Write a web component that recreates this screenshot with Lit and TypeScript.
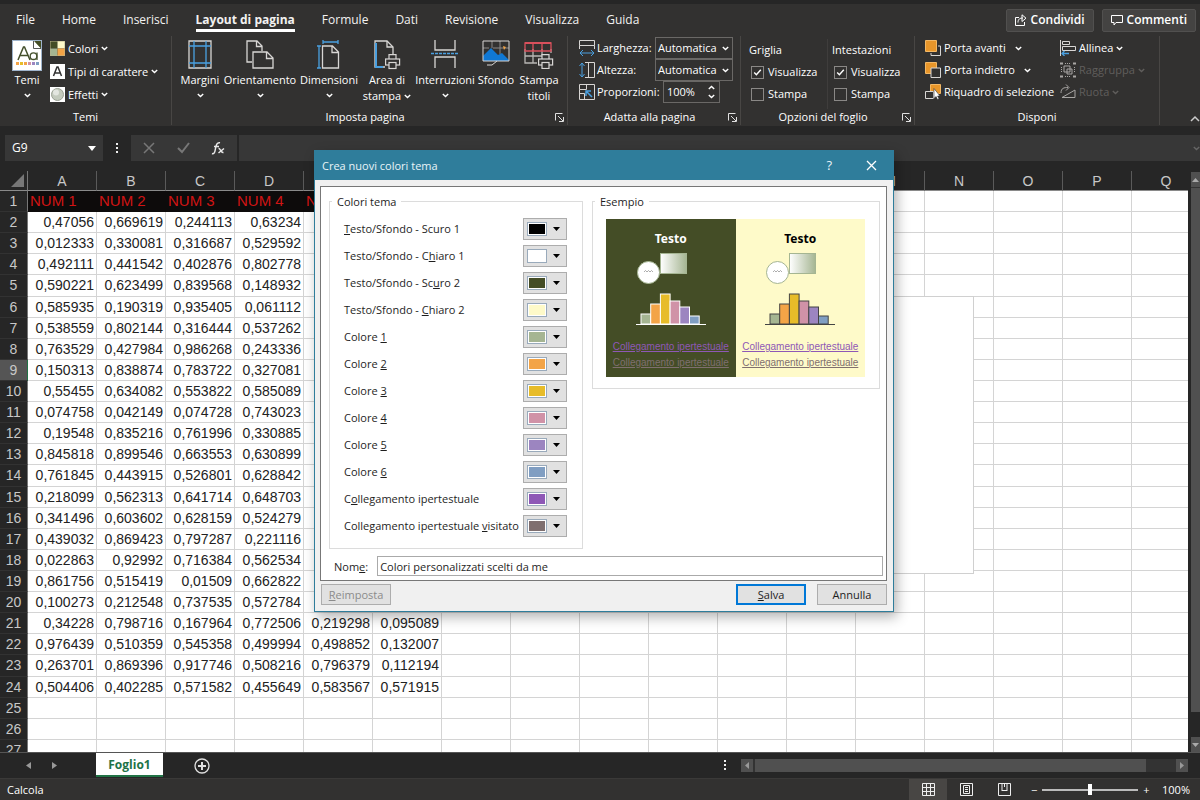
import { LitElement, html, css, svg, nothing } from "lit";
import { customElement } from "lit/decorators.js";

const COLS = "ABCDEFGHIJKLMNOPQ".split("");

const DATA: string[][] = [
  ["0,47056", "0,669619", "0,244113", "0,63234"],
  ["0,012333", "0,330081", "0,316687", "0,529592"],
  ["0,492111", "0,441542", "0,402876", "0,802778"],
  ["0,590221", "0,623499", "0,839568", "0,148932"],
  ["0,585935", "0,190319", "0,935405", "0,061112"],
  ["0,538559", "0,802144", "0,316444", "0,537262"],
  ["0,763529", "0,427984", "0,986268", "0,243336"],
  ["0,150313", "0,838874", "0,783722", "0,327081"],
  ["0,55455", "0,634082", "0,553822", "0,585089"],
  ["0,074758", "0,042149", "0,074728", "0,743023"],
  ["0,19548", "0,835216", "0,761996", "0,330885"],
  ["0,845818", "0,899546", "0,663553", "0,630899"],
  ["0,761845", "0,443915", "0,526801", "0,628842"],
  ["0,218099", "0,562313", "0,641714", "0,648703"],
  ["0,341496", "0,603602", "0,628159", "0,524279"],
  ["0,439032", "0,869423", "0,797287", "0,221116"],
  ["0,022863", "0,92992", "0,716384", "0,562534"],
  ["0,861756", "0,515419", "0,01509", "0,662822"],
  ["0,100273", "0,212548", "0,737535", "0,572784"],
  ["0,34228", "0,798716", "0,167964", "0,772506", "0,219298", "0,095089"],
  ["0,976439", "0,510359", "0,545358", "0,499994", "0,498852", "0,132007"],
  ["0,263701", "0,869396", "0,917746", "0,508216", "0,796379", "0,112194"],
  ["0,504406", "0,402285", "0,571582", "0,455649", "0,583567", "0,571915"],
];

const SWATCHES: [string, string, string, string][] = [
  ["", "T", "esto/Sfondo - Scuro 1", "#000000"],
  ["Testo/Sfondo - C", "h", "iaro 1", "#ffffff"],
  ["Testo/Sfondo - Sc", "u", "ro 2", "#444d26"],
  ["Testo/Sfondo - ", "C", "hiaro 2", "#fefac9"],
  ["Colore ", "1", "", "#a5b592"],
  ["Colore ", "2", "", "#f3a447"],
  ["Colore ", "3", "", "#e7bc29"],
  ["Colore ", "4", "", "#d092a7"],
  ["Colore ", "5", "", "#9c85c0"],
  ["Colore ", "6", "", "#809ec2"],
  ["C", "o", "llegamento ipertestuale", "#8e58b6"],
  ["Collegamento ipertestuale ", "v", "isitato", "#7f6f6f"],
];

const caret = html`<svg class="caret" width="7" height="5" viewBox="0 0 7 5"><path d="M.8 1 3.5 3.6 6.2 1" fill="none" stroke="currentColor" stroke-width="1.4"/></svg>`;
const launcher = html`<svg width="9" height="9" viewBox="0 0 9 9" fill="none" stroke="#e0e0e0"><path d="M.5 7.5v-7h7M3 3l5 5M8.5 4v4.5H4"/></svg>`;

const printer = (x: number, y: number) => svg`<g transform="translate(${x} ${y})" fill="#323130" stroke="#d8d6d4" stroke-width="1.2"><path d="M4 5.500V.6h7v5"/><rect x=".6" y="5" width="14" height="6"/><rect x="4" y="8.500" width="7" height="6"/></g>`;

const icons = {
  temi: html`<svg width="30" height="31" viewBox="0 0 30 31"><rect x=".5" y=".5" width="29" height="30" fill="#fff" stroke="#9fb4cc"/><path d="M22 1h7v8z" fill="#444d26"/><path d="M21.500 1v7.500H29" fill="#fff" stroke="#555"/><path d="M6 20 11.500 7h1L18 20M8 15.500h8" fill="none" stroke="#44502c" stroke-width="1.500"/><circle cx="21.500" cy="16.200" r="3.300" fill="none" stroke="#44502c" stroke-width="1.300"/><path d="M25 12.500V20" stroke="#44502c" stroke-width="1.300"/><path d="M4 22h3v3H4z" fill="#f3a447"/><path d="M8 22h3v3H8z" fill="#e7bc29"/><path d="M12 22h3v3h-3z" fill="#f3a447"/><path d="M16 22h3v3h-3z" fill="#d092a7"/><path d="M20 22h3v3h-3z" fill="#9c85c0"/><path d="M24 22h3v3h-3z" fill="#809ec2"/></svg>`,
  colori: html`<svg width="15" height="15" viewBox="0 0 15 15"><path fill="#444d26" d="M0 0h7.500v7.500H0z"/><path fill="#fefac9" d="M7.500 0H15v7.500H7.500z"/><path fill="#a5b592" d="M0 7.500h7.500V15H0z"/><path fill="#f3a447" d="M7.500 7.500H15V15H7.500z"/><path d="M0 0h15v15H0z" fill="none" stroke="#b9b48c"/></svg>`,
  tipi: html`<svg width="15" height="15" viewBox="0 0 15 15"><path fill="#fff" d="M0 0h15v15H0z"/><path d="M3.500 12 7 3h1l3.500 9M5 9h5" fill="none" stroke="#333" stroke-width="1.500"/></svg>`,
  effetti: html`<svg width="15" height="15" viewBox="0 0 15 15"><path fill="#fff" d="M0 0h15v15H0z"/><circle cx="7.500" cy="7.500" r="6" fill="#c3cabd" stroke="#9aa094"/><circle cx="6" cy="5.500" r="3" fill="#e3e6e0"/></svg>`,
  margini: html`<svg width="24" height="29" viewBox="0 0 24 29" fill="none"><path d="M1 1h22v27H1z" stroke="#d8d6d4" stroke-width="1.300"/><path d="M6 1v27M18 1v27M1 6h22M1 23h22" stroke="#4aa0e0" stroke-width="1.300"/></svg>`,
  orient: html`<svg width="28" height="29" viewBox="0 0 28 29" fill="none" stroke="#d8d6d4" stroke-width="1.300"><path d="M6 22H1V1h10l5 5v5M10.500 1v5.500H16"/><path d="M7 12h14l6 6v10H7zM20.500 12v6.500H27"/></svg>`,
  dimens: html`<svg width="24" height="29" viewBox="0 0 24 29" fill="none" stroke-width="1.300"><path d="M5.500 6h10l6 6v16h-16zM15 6v6.500h6.500" stroke="#d8d6d4"/><path d="M6 2h15M6 0v4M21 0v4M2 6v22M0 6h4M0 28h4" stroke="#4aa0e0"/></svg>`,
  area: html`<svg width="28" height="30" viewBox="0 0 28 30" fill="none" stroke-width="1.300"><path d="M12 27H2V1h12l6 6v8" stroke="#d8d6d4"/><path d="M14 1v6h6" stroke="#d8d6d4"/><path d="M10 27H3V3" stroke="#4aa0e0" stroke-width="2"/>${printer(12, 14)}</svg>`,
  interr: html`<svg width="28" height="29" viewBox="0 0 28 29" fill="none" stroke-width="1.300"><path d="M4 0v10h20V0M4 28V17h20v11" stroke="#d8d6d4"/><path d="M0 13.500h28" stroke="#4aa0e0" stroke-dasharray="3 1"/></svg>`,
  sfondo: html`<svg width="28" height="26" viewBox="0 0 28 26"><path d="M1 1h26v20H1z" fill="#323130"/><path d="M1 8h6M11 8h16M10 1v7M18 1v13" stroke="#8a8886"/><path d="M1 21v-5L9 8l7 7 4-2 7 7v1z" fill="#1078d4"/><path d="M21 6l3 1-2 3z" fill="#f3a447"/><path d="M1 1h26v20H1zM5 25h5l5-4" fill="none" stroke="#d8d6d4"/></svg>`,
  titoli: html`<svg width="30" height="29" viewBox="0 0 30 29" fill="none" stroke-width="1.300"><path d="M1 9v14h12M1 16h20M9 9v14M18 9v6M27 9v4" stroke="#b8b6b4"/><path d="M1 3h26v8H1zM9 3v8M18 3v8" stroke="#d8505c"/><path d="M1 3h26" stroke="#d8505c" stroke-width="2"/>${printer(14, 14)}</svg>`,
  largh: html`<svg width="16" height="16" viewBox="0 0 16 16" fill="none"><path d="M.5.5h15v5H.5zM.5 9V5.500M15.500 9V5.500" stroke="#d8d6d4"/><path d="M1 13h14M4 10l-3 3 3 3M12 10l3 3-3 3" stroke="#4aa0e0"/></svg>`,
  alt: html`<svg width="16" height="16" viewBox="0 0 16 16" fill="none"><path d="M6 .5h9.500v15H6M9.500.5v15" stroke="#d8d6d4"/><path d="M3 1v14M.5 4 3 1l2.500 3M.5 12 3 15l2.500-3" stroke="#4aa0e0"/></svg>`,
  prop: html`<svg width="16" height="16" viewBox="0 0 16 16" fill="none"><path d="M.5 5.500V.5h15v15H.5zM.5 9.500h5V16M.5 5.500h7V.5" stroke="#d8d6d4"/><path d="M13 13 7 7M7 12V7h5" stroke="#4aa0e0" stroke-width="1.500"/></svg>`,
  avanti: html`<svg width="16" height="16" viewBox="0 0 16 16"><path d="M13 6h2.500v9.500H6V13" fill="none" stroke="#d8d6d4"/><path fill="#e8962a" stroke="#f3b865" d="M.5.5h11v11H.5z"/></svg>`,
  indietro: html`<svg width="16" height="16" viewBox="0 0 16 16"><path fill="#e8962a" stroke="#f3b865" d="M.5.5h11v11H.5z"/><path d="M6 6h9.500v9.500H6z" fill="#323130" stroke="#d8d6d4"/></svg>`,
  riquadro: html`<svg width="16" height="16" viewBox="0 0 16 16"><path fill="#e8962a" stroke="#f3b865" d="M5.500.5h10v9h-10z"/><path d="M.5 7.500h8v7h-8z" fill="#323130" stroke="#d8d6d4"/><path d="M9 4.500v10l2-2 1.500 3 1.500-.8-1.400-2.700H15z" fill="#fff" stroke="#323130" stroke-width=".6"/></svg>`,
  allinea: html`<svg width="16" height="16" viewBox="0 0 16 16" fill="none"><path d="M.5 0v16M2.500 1.500h7v3h-7zM2.500 6.500h13v4h-13z" stroke="#d8d6d4"/><path d="M2 13.500h7M4.500 11 2 13.500 4.500 16" stroke="#4aa0e0" stroke-width="1.300"/></svg>`,
  raggr: html`<svg width="16" height="16" viewBox="0 0 16 16" fill="none" stroke="#a8a6a4"><path d="M1.500 5v6M14.500 5v6M5 1.500h6M5 14.500h6" stroke-dasharray="1 1"/><path d="M0 1.500h3M0 14.500h3M13 1.500h3M13 14.500h3" stroke-width="2"/><path d="M4 4h6v6H4zM7 7h5v5H7z"/></svg>`,
  ruota: html`<svg width="16" height="16" viewBox="0 0 16 16" fill="none" stroke="#a8a6a4"><path d="M2 13.500h13V6zM1 9C1 4 4 3.500 8 3.500M6 .5l3 3-3 3"/></svg>`,
};

@customElement("app-root")
export class AppRoot extends LitElement {
  static styles = css`
    :host {
      display: flex;
      flex-direction: column;
      position: relative;
      height: 100vh;
      overflow: hidden;
      background: #262626;
      color: #fff;
      font: 12px/16px "Open Sans", "Noto Sans", sans-serif;
    }
    * { box-sizing: border-box; }
    svg { display: block; flex: none; }
    button, input, select {
      font: inherit;
      color: inherit;
      background: none;
      border: 0;
      padding: 0;
      margin: 0;
      border-radius: 0;
      outline: 0;
    }
    .ribbon { flex: none; margin-top: 4px; background: #323130; height: 122px; display: flex; flex-direction: column; }
    .tabs { display: flex; align-items: center; height: 32px; padding-left: 16px; }
    .tabs nav { display: flex; gap: 27px; flex: 1; align-items: center; }
    .tab { color: #f3f2f1; text-decoration: none; padding: 3px 0 1px; border-bottom: 3px solid transparent; }
    .tab.on { font-weight: 700; border-color: #fff; }
    .actions { display: flex; gap: 8px; padding-right: 4px; }
    .action { display: flex; align-items: center; gap: 4px; height: 23px; padding: 0 8px; background: #444342; border: 1px solid #51504f; border-radius: 2px; font-weight: 600; }
    .groups { flex: 1; display: flex; padding-bottom: 1px; font-size: 11px; font-weight: 500; }
    .group { display: flex; flex-direction: column; border-right: 1px solid #484644; flex: none; }
    .body { flex: 1; display: flex; }
    .foot { display: flex; align-items: center; height: 16px; padding: 0 3px; }
    .foot span { flex: 1; text-align: center; }
    .big { display: flex; flex-direction: column; align-items: center; justify-content: flex-start; padding-top: 4px; flex: none; white-space: nowrap; }
    .big .pic { height: 32px; }
    .big .row { display: flex; gap: 3px; align-items: center; }
    .big .caret { margin-top: 5px; }
    .big .row .caret { margin: 0; }
    .stack { display: flex; flex-direction: column; padding-top: 1px; }
    .item { display: flex; align-items: center; gap: 3px; height: 22px; white-space: nowrap; }
    .off { color: #605e5c; }
    .g-temi { width: 172px; }
    .g-temi .body { padding-left: 12px; gap: 8px; }
    .g-temi .item { height: 23px; }
    .g-page { width: 396px; }
    .g-page .body { padding-left: 7px; }
    .g-fit { width: 173px; }
    .g-fit .body { padding-left: 11px; }
    .g-fit .item { gap: 2px; }
    .g-opt { width: 174px; }
    .g-opt .body { padding: 3px 0 0 8px; }
    .g-disp { width: 245px; }
    .g-disp .body { padding-left: 10px; gap: 6px; }
    .g-disp .split .caret { margin-left: 6px; }
    .w42 { width: 42px; } .w44 { width: 44px; } .w56 { width: 56px; } .w60 { width: 60px; } .w78 { width: 78px; }
    .lab { width: 56px; }
    .lab.wide { width: 64px; }
    .sel { position: relative; width: 78px; height: 22px; border: 1px solid #6a6866; display: flex; align-items: center; }
    .sel select { appearance: none; width: 100%; padding-left: 2px; }
    .sel .caret { position: absolute; right: 3px; pointer-events: none; }
    .spin { width: 57px; height: 22px; border: 1px solid #6a6866; display: flex; align-items: center; padding: 0 4px 0 3px; }
    .spin input { flex: 1; min-width: 0; }
    .spin .arrows { display: flex; flex-direction: column; gap: 4px; }
    .flip { transform: scaleY(-1); }
    .opts { width: 78px; display: flex; flex-direction: column; }
    .opts + .opts { border-left: 1px solid #3f3d3c; padding-left: 4px; width: 85px; }
    .opts .item { gap: 4px; }
    .opts input { appearance: none; width: 13px; height: 13px; border: 1px solid #8a8886; margin: 0 0 0 2px; background: #323130; }
    .opts input:checked { background: #323130 url("data:image/svg+xml,%3Csvg xmlns='http://www.w3.org/2000/svg' viewBox='0 0 10 10'%3E%3Cpath d='M2 5l2 2 4-4.500' fill='none' stroke='%23fff' stroke-width='1.300'/%3E%3C/svg%3E"); }
    .collapse { flex: 1; display: flex; align-items: flex-end; justify-content: flex-end; padding-bottom: 3px; }

    .fbar { flex: none; display: flex; margin-top: 9px; height: 26px; padding-left: 5px; }
    .box { background: #373737; display: flex; align-items: center; }
    .name { width: 98px; padding: 0 7px; }
    .name input { flex: 1; min-width: 0; }
    .dots { width: 28px; display: flex; align-items: center; justify-content: center; }
    .fx { width: 106px; justify-content: space-between; padding: 0 12px; }
    .formula { flex: 1; margin-left: 2px; justify-content: flex-end; color: #666; }
    .formula input { flex: 1; min-width: 0; height: 24px; }

    .main { flex: 1; min-height: 0; display: flex; padding-top: 10px; }
    .sheet { flex: 1; min-width: 0; position: relative; overflow: hidden; }
    table { border-collapse: separate; border-spacing: 0; table-layout: fixed; width: 1201px; height: calc(100% + 9px); font: 14px/18px "Liberation Sans", sans-serif; background: #fff; color: #222; }
    th, td { padding: 0; font-weight: 400; overflow: hidden; white-space: nowrap; }
    thead th { height: 20px; background: #262626; color: #c8c8c8; border-right: 1px solid #5a5a5a; border-bottom: 1px solid #8a8a8a; }
    thead th:first-child { width: 28px; border-right-color: #777; }
    thead th:first-child svg { margin-left: auto; margin-right: 3px; }
    tbody th { height: 21px; background: #262626; color: #c8c8c8; border-right: 1px solid #777; border-bottom: 1px solid #323232; }
    tbody th.cur { background: #555; border-right-color: #217346; }
    td { border-right: 1px solid #d4d4d4; border-bottom: 1px solid #d4d4d4; text-align: right; padding-right: 2px; }
    tr.head td.h { background: #0d0b0b; color: #d01414; text-align: left; padding: 0 0 0 2px; border-color: #0d0b0b; font-size: 15px; }
    .chart { position: absolute; left: 500px; top: 125px; width: 474px; height: 278px; background: #fff; border: 1px solid #d0d0d0; }
    .vscroll { width: 12px; display: flex; flex-direction: column; background: #262626; padding: 1px 0 0 3px; }
    .vscroll button { height: 15px; background: #505050; display: flex; align-items: center; justify-content: center; }
    .vscroll .thumb { flex: 1; background: #505050; border-top: 1px solid #333; margin-bottom: 25px; }

    .sheets { flex: none; height: 26px; display: flex; background: #262626; border-top: 1px solid #555; }
    .nav { width: 96px; display: flex; align-items: center; padding-left: 26px; gap: 21px; }
    .sheettab { height: 24px; width: 67px; padding-top: 2px; background: #fff; color: #217346; border-bottom: 2px solid #217346; font-weight: 700; }
    .add { margin-left: 31px; }
    .hs { margin-left: auto; display: flex; align-items: center; width: 476px; gap: 14px; padding-right: 12px; }
    .track { flex: 1; height: 13px; background: #333; display: flex; }
    .track button { width: 12px; background: #505050; display: flex; align-items: center; justify-content: center; }
    .track .thumb { flex: 1; margin: 0 30px 0 2px; background: #505050; }
    .status { flex: none; height: 22px; display: flex; background: #323130; border-top: 1px solid #3a3938; align-items: center; padding-left: 7px; font-size: 11px; }
    .status .mode { flex: 1; }
    .status .view { height: 21px; width: 38px; display: flex; align-items: center; justify-content: center; }
    .status .view.on { background: #484644; }
    .zoom { display: flex; align-items: center; gap: 5px; width: 177px; padding-left: 8px; }
    .zoom input { appearance: none; width: 96px; height: 2px; background: #bbb; }
    .zoom input::-webkit-slider-thumb { appearance: none; width: 4px; height: 11px; background: #fff; }
    .zoom output { margin-left: auto; padding-right: 10px; }

    .dialog { position: absolute; left: 314px; top: 150px; width: 580px; color: #1e1e1e; background: #f0f0f0; border: 1px solid #2f7d9b; box-shadow: 3px 5px 12px rgba(0, 0, 0, .3); font: 11px/15px "Open Sans", "Noto Sans", sans-serif; }
    .title { display: flex; align-items: center; height: 29px; background: #2f7d9b; color: #e9f4f8; padding: 0 16px 0 7px; }
    .title h1 { flex: 1; margin: 0; font-size: 11px; font-weight: 400; }
    .title button { margin-left: 34px; font-size: 13px; }
    .pane { margin: 6px 6px 0 5px; border: 1px solid #777; background: #fff; padding: 7px 3px 4px 8px; }
    .cols { display: flex; align-items: flex-start; gap: 9px; }
    fieldset { margin: 0; border: 1px solid #dcdcdc; min-width: 0; }
    legend { padding: 0 5px; height: 15px; }
    .theme { width: 254px; padding: 6px 15px 9px 14px; }
    .theme legend { margin-left: -12px; }
    .sw { display: flex; justify-content: space-between; align-items: center; height: 27px; white-space: nowrap; }
    .sw button { width: 44px; height: 22px; background: #e1e1e1; border: 1px solid #adadad; display: flex; align-items: center; gap: 6px; padding-left: 3px; }
    .chip { width: 20px; height: 14px; border: 1px solid #9ab; background: #fff; padding: 1px; }
    .chip i { display: block; height: 10px; }
    .sample { width: 288px; padding: 10px 14px 11px 13px; }
    .sample legend { margin-left: -11px; }
    .previews { display: flex; }
    .pv { flex: 1; min-width: 0; height: 158px; background: #444d26; text-align: center; padding-top: 12px; display: flex; flex-direction: column; align-items: center; }
    .pv b { color: #fff; font: 700 12px/16px "Noto Sans", sans-serif; }
    .pv.light { background: #fefac9; }
    .pv.light b { color: #000; }
    .pv a { font: 10px/16px "Liberation Sans", sans-serif; color: #8e58b6; white-space: nowrap; }
    .pv a + a { color: #7f6f6f; }
    .pv svg { margin: 5px 0 13px; }
    .nome { display: flex; align-items: center; gap: 9px; margin-top: 7px; padding-left: 5px; }
    .nome input { flex: 1; height: 20px; border: 1px solid #aaa; padding: 0 2px; }
    .buttons { display: flex; gap: 11px; padding: 3px 6px 6px; }
    .btn { width: 70px; height: 21px; background: #e1e1e1; border: 1px solid #adadad; }
    .btn:first-child { margin-right: auto; color: #8b8b8b; }
    .btn.def { border: 2px solid #0078d7; }
  `;

  private big(cls: string, icon: unknown, lines: unknown, below = true) {
    return html`<button class="big ${cls}"><span class="pic">${icon}</span>${lines}${below ? caret : nothing}</button>`;
  }

  private item(icon: unknown, label: string, drop = true, off = false, split = false) {
    return html`<button class="item ${off ? "off" : ""} ${split ? "split" : ""}" ?disabled=${off}>${icon}<span>${label}</span>${drop ? caret : nothing}</button>`;
  }

  private group(cls: string, label: string, body: unknown, launch = true) {
    return html`<section class="group ${cls}"><div class="body">${body}</div><div class="foot"><span>${label}</span>${launch ? launcher : nothing}</div></section>`;
  }

  private opts(title: string) {
    return html`<div class="opts"><div class="item">${title}</div><label class="item"><input type="checkbox" checked />Visualizza</label><label class="item"><input type="checkbox" />Stampa</label></div>`;
  }

  private preview(light: boolean) {
    const bars: [number, string][] = [[10, "#a5b592"], [20, "#f3a447"], [30, "#e7bc29"], [23, "#d092a7"], [17, "#9c85c0"], [8, "#809ec2"]];
    const line = light ? "#444" : "#fff";
    const id = light ? "gl" : "gd";
    return html`<div class="pv ${light ? "light" : ""}">
      <b>Testo</b>
      <svg width="70" height="74" viewBox="0 0 70 74">
        <defs><linearGradient id=${id}><stop offset="0" stop-color="#fff"/><stop offset="1" stop-color="#a5b592"/></linearGradient></defs>
        <rect x="24.500" y="1.500" width="26" height="20" fill="url(#${id})" stroke="#a5b592"/>
        <circle cx="12.500" cy="20.500" r="11" fill="#fff" stroke="#a5b592"/>
        <path d="m8 20 1.500-1.500L11 20l1.500-1.500L14 20l1.500-1.500L17 20" fill="none" stroke="#888" stroke-width=".7"/>
        ${bars.map(([h, c], i) => svg`<rect x=${5 + i * 9.7} y=${72 - h} width="9.700" height=${h} fill=${c} stroke=${line} stroke-width="1"/>`)}
        <path d="M0 72.500h70" stroke=${line}/>
      </svg>
      <a href="#">Collegamento ipertestuale</a>
      <a href="#">Collegamento ipertestuale</a>
    </div>`;
  }

  private ribbon() {
    const tabs = ["File", "Home", "Inserisci", "Layout di pagina", "Formule", "Dati", "Revisione", "Visualizza", "Guida"];
    return html`<header class="ribbon">
      <div class="tabs">
        <nav>${tabs.map((t) => html`<a href="#" class="tab ${t.startsWith("Layout") ? "on" : ""}">${t}</a>`)}</nav>
        <div class="actions">
          <button class="action"><svg width="12" height="12" viewBox="0 0 12 12" fill="none" stroke="#fff"><path d="M4 3.500H.5v8h9V8M3 8.500C3 5 5 4 8 4M7 .8l4 3.400L7 7.500z"/></svg>Condividi</button>
          <button class="action"><svg width="12" height="12" viewBox="0 0 12 12" fill="none" stroke="#fff"><path d="M.5 1.500h11v7H5l-2 2.500V8.500H.5z"/></svg>Commenti</button>
        </div>
      </div>
      <div class="groups">
        ${this.group("g-temi", "Temi", html`${this.big("", icons.temi, html`<span>Temi</span>`)}
          <div class="stack">${this.item(icons.colori, "Colori")}${this.item(icons.tipi, "Tipi di carattere")}${this.item(icons.effetti, "Effetti")}</div>`, false)}
        ${this.group("g-page", "Imposta pagina", html`
          ${this.big("w42", icons.margini, html`<span>Margini</span>`)}
          ${this.big("w78", icons.orient, html`<span>Orientamento</span>`)}
          ${this.big("w60", icons.dimens, html`<span>Dimensioni</span>`)}
          ${this.big("w56", icons.area, html`<span>Area di</span><span class="row">stampa ${caret}</span>`, false)}
          ${this.big("w60", icons.interr, html`<span>Interruzioni</span>`)}
          ${this.big("w42", icons.sfondo, html`<span>Sfondo</span>`, false)}
          ${this.big("w44", icons.titoli, html`<span>Stampa</span><span>titoli</span>`, false)}`)}
        ${this.group("g-fit", "Adatta alla pagina", html`<div class="stack">
          ${["Larghezza:", "Altezza:"].map((l, i) => html`<div class="item">${i ? icons.alt : icons.largh}<label class="lab" for="s${i}">${l}</label><span class="sel"><select id="s${i}"><option>Automatica</option></select>${caret}</span></div>`)}
          <div class="item">${icons.prop}<label class="lab wide" for="pct">Proporzioni:</label><span class="spin"><input id="pct" value="100%" /><span class="arrows"><span class="flip">${caret}</span>${caret}</span></span></div>
        </div>`)}
        ${this.group("g-opt", "Opzioni del foglio", html`${this.opts("Griglia")}${this.opts("Intestazioni")}`)}
        ${this.group("g-disp", "Disponi", html`
          <div class="stack">${this.item(icons.avanti, "Porta avanti", true, false, true)}${this.item(icons.indietro, "Porta indietro", true, false, true)}${this.item(icons.riquadro, "Riquadro di selezione", false)}</div>
          <div class="stack">${this.item(icons.allinea, "Allinea")}${this.item(icons.raggr, "Raggruppa", true, true)}${this.item(icons.ruota, "Ruota", true, true)}</div>`, false)}
        <div class="collapse"><svg width="10" height="7" viewBox="0 0 10 7" fill="none" stroke="#ccc" stroke-width="1.500"><path d="m1 6 4-4 4 4"/></svg></div>
      </div>
    </header>`;
  }

  private sheet() {
    return html`<main class="main">
      <div class="sheet">
        <table>
          <thead><tr><th><svg width="13" height="13" viewBox="0 0 13 13"><path d="M13 0v13H0z" fill="#777"/></svg></th>${COLS.map((c) => html`<th scope="col">${c}</th>`)}</tr></thead>
          <tbody>
            <tr class="head"><th scope="row">1</th>${COLS.map((_, i) => html`<td class=${i < 6 ? "h" : ""}>${i < 5 ? `NUM ${i + 1}` : ""}</td>`)}</tr>
            ${Array.from({ length: 26 }, (_, r) => html`<tr><th scope="row" class=${r === 7 ? "cur" : ""}>${r + 2}</th>${COLS.map((_, i) => html`<td>${DATA[r]?.[i] ?? ""}</td>`)}</tr>`)}
          </tbody>
        </table>
        <div class="chart"></div>
      </div>
      <div class="vscroll"><button aria-label="Su"><svg width="7" height="4" viewBox="0 0 7 4"><path d="M0 4 3.500 0 7 4z" fill="#aaa"/></svg></button><div class="thumb"></div><button aria-label="Giù"><svg width="7" height="4" viewBox="0 0 7 4"><path d="M0 0l3.500 4L7 0z" fill="#aaa"/></svg></button></div>
    </main>`;
  }

  private dialog() {
    return html`<div class="dialog" role="dialog" aria-label="Crea nuovi colori tema">
      <div class="title"><h1>Crea nuovi colori tema</h1><button>?</button><button aria-label="Chiudi"><svg width="11" height="11" viewBox="0 0 11 11" stroke="#fff" stroke-width="1.300"><path d="m1 1 9 9M10 1l-9 9"/></svg></button></div>
      <div class="pane">
        <div class="cols">
          <fieldset class="theme"><legend>Colori tema</legend>
            ${SWATCHES.map(([a, k, b, c], i) => html`<div class="sw"><label for="c${i}">${a}<u>${k}</u>${b}</label><button id="c${i}"><span class="chip"><i style="background:${c}"></i></span><svg width="7" height="4" viewBox="0 0 7 4"><path d="M0 0h7L3.500 4z"/></svg></button></div>`)}
          </fieldset>
          <fieldset class="sample"><legend>Esempio</legend><div class="previews">${this.preview(false)}${this.preview(true)}</div></fieldset>
        </div>
        <div class="nome"><label for="nome">Nom<u>e</u>:</label><input id="nome" value="Colori personalizzati scelti da me" /></div>
      </div>
      <div class="buttons"><button class="btn" disabled><u>R</u>eimposta</button><button class="btn def"><u>S</u>alva</button><button class="btn">Annulla</button></div>
    </div>`;
  }

  render() {
    const dots = html`<svg width="3" height="11" viewBox="0 0 3 11" fill="#eee"><path d="M0 0h2v2H0zM0 4h2v2H0zM0 8h2v2H0z"/></svg>`;
    return html`
      ${this.ribbon()}
      <div class="fbar">
        <div class="box name"><input aria-label="Casella nome" value="G9" /><svg width="8" height="5" viewBox="0 0 8 5"><path d="M0 0h8L4 5z" fill="#fff"/></svg></div>
        <div class="dots">${dots}</div>
        <div class="box fx">
          <svg width="12" height="12" viewBox="0 0 12 12" stroke="#777" stroke-width="1.500"><path d="m1 1 10 10M11 1 1 11"/></svg>
          <svg width="13" height="12" viewBox="0 0 13 12" fill="none" stroke="#777" stroke-width="2"><path d="m1 6 4 4 7-9"/></svg>
          <svg width="14" height="14" viewBox="0 0 14 14" fill="none" stroke="#e8e8e8" stroke-width="1.500"><path d="M1 12.500c2.500 1 3-2 3.500-5S6 1 9 1.800M3 5.500h5M7.500 7.500c2-.5 2 4.500 5 4M13 7.500 7.500 12"/></svg>
        </div>
        <div class="box formula"><input aria-label="Barra della formula" />${caret}</div>
      </div>
      ${this.sheet()}
      <div class="sheets">
        <div class="nav"><svg width="5" height="7" viewBox="0 0 5 7"><path d="M5 0v7L0 3.500z" fill="#999"/></svg><svg width="5" height="7" viewBox="0 0 5 7"><path d="M0 0v7l5-3.500z" fill="#999"/></svg></div>
        <button class="sheettab">Foglio1</button>
        <button class="add" aria-label="Nuovo foglio"><svg width="16" height="16" viewBox="0 0 16 16" fill="none" stroke="#e0e0e0"><circle cx="8" cy="8" r="7" stroke-width="1.300"/><path d="M8 4v8M4 8h8" stroke-width="2"/></svg></button>
        <div class="hs">${dots}<div class="track"><button aria-label="Sinistra"><svg width="4" height="7" viewBox="0 0 4 7"><path d="M4 0v7L0 3.500z" fill="#999"/></svg></button><div class="thumb"></div><button aria-label="Destra"><svg width="4" height="7" viewBox="0 0 4 7"><path d="M0 0v7l4-3.500z" fill="#999"/></svg></button></div></div>
      </div>
      <footer class="status">
        <span class="mode">Calcola</span>
        <button class="view on" aria-label="Normale"><svg width="13" height="13" viewBox="0 0 13 13" fill="none" stroke="#eee"><path d="M.5.5h12v12H.5zM4.500 0v13M8.500 0v13M0 4.500h13M0 8.500h13"/></svg></button>
        <button class="view" aria-label="Layout di pagina"><svg width="13" height="13" viewBox="0 0 13 13" fill="none" stroke="#eee"><path d="M.5.5h12v12H.5zM3.500 2.500h6v8h-6zM5 4.500h3M5 6.500h3M5 8.500h3"/></svg></button>
        <button class="view" aria-label="Anteprima interruzioni"><svg width="13" height="13" viewBox="0 0 13 13" fill="none" stroke="#eee"><path d="M.5.5h12v12H.5zM4 0v8M9 0v8M4 7.500h5M6.500 0v4"/></svg></button>
        <div class="zoom"><span>−</span><input type="range" aria-label="Zoom" value="50" /><span>+</span><output>100%</output></div>
      </footer>
      ${this.dialog()}
    `;
  }
}
